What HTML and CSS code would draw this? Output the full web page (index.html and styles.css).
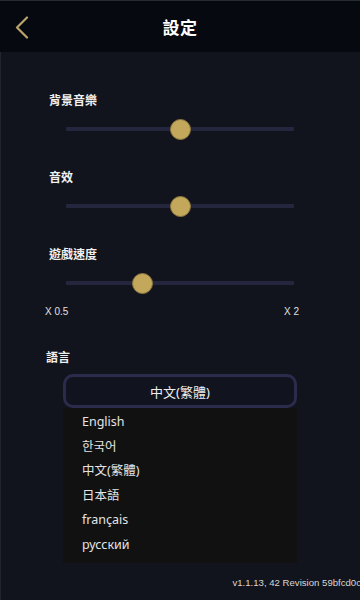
FILE: index.html
```html
<!DOCTYPE html>
<html lang="zh-Hant">
<head>
<meta charset="utf-8">
<link rel="stylesheet" href="styles.css">
</head>
<body>
<div class="app">
  <header class="header">
    <div class="back">
      <svg width="14" height="24" viewBox="0 0 14 24"><path d="M12 1.5 L2 11.5 L12 21.5" fill="none" stroke="#b9a46c" stroke-width="2.2" stroke-linecap="round" stroke-linejoin="round"/></svg>
    </div>
    <h1 class="title">設定</h1>
    <div></div>
  </header>

  <main class="content">
    <section class="setting">
      <div class="label">背景音樂</div>
      <div class="slider"><div class="track"></div><div class="thumb" style="left: 50%"></div></div>
    </section>
    <section class="setting">
      <div class="label">音效</div>
      <div class="slider"><div class="track"></div><div class="thumb" style="left: 50%"></div></div>
    </section>
    <section class="setting">
      <div class="label">遊戲速度</div>
      <div class="slider"><div class="track"></div><div class="thumb" style="left: 33.5%"></div></div>
      <div class="scale"><span>X 0.5</span><span>X 2</span></div>
    </section>

    <section class="lang">
      <div class="label lang-label">語言</div>
      <div class="select">中文(繁體)</div>
      <ul class="options">
        <li>English</li>
        <li>한국어</li>
        <li>中文(繁體)</li>
        <li>日本語</li>
        <li>français</li>
        <li>русский</li>
      </ul>
    </section>
  </main>

  <footer class="version">v1.1.13, 42 Revision 59bfcd0c</footer>
</div>
</body>
</html>
```

FILE: styles.css
```css
* { box-sizing: border-box; }
html, body { margin: 0; padding: 0; }
body {
  width: 360px;
  height: 600px;
  overflow: hidden;
  background: #12141d;
  font-family: "Noto Sans", "Noto Sans CJK TC", sans-serif;
  color: #f2f2f2;
}
.app {
  width: 360px;
  height: 600px;
  display: flex;
  flex-direction: column;
  box-shadow: inset 1px 0 0 #22252e;
}
.header {
  height: 52px;
  flex: none;
  background: #060910;
  border-top: 1px solid #262a33;
  display: grid;
  grid-template-columns: 48px 1fr 48px;
  align-items: center;
}
.back {
  display: flex;
  align-items: center;
  padding-left: 15px;
  padding-top: 2px;
}
.title {
  margin: 0;
  text-align: center;
  font-size: 17px;
  font-weight: 700;
  font-family: "Noto Sans CJK TC", sans-serif;
  color: #ffffff;
  letter-spacing: 0.5px;
}
.content {
  flex: 1;
  padding: 40px 0 0 0;
  display: flex;
  flex-direction: column;
}
.setting {
  display: flex;
  flex-direction: column;
  padding: 0 0 30px 0;
}
.label {
  padding-left: 49px;
  height: 16px;
  line-height: 16px;
  font-size: 12px;
  font-weight: 700;
  font-family: "Noto Sans CJK TC", sans-serif;
  color: #f0f0f0;
}
.slider {
  position: relative;
  height: 20px;
  margin: 11px 66px 0 66px;
}
.track {
  position: absolute;
  left: 0;
  right: 0;
  top: 8px;
  height: 4px;
  background: #24263e;
  border-radius: 1px;
}
.thumb {
  position: absolute;
  top: 0;
  width: 21px;
  height: 21px;
  margin-left: -10.5px;
  border-radius: 50%;
  background: #c3a85b;
  border: 1px solid #8c7641;
}
.scale {
  display: flex;
  justify-content: space-between;
  margin: 13px 61px 0 45px;
  height: 12px;
  line-height: 12px;
  font-size: 10px;
  font-family: "Liberation Sans", sans-serif;
  color: #e0e0e0;
}
.setting:nth-child(3) { padding-bottom: 31px; }
.lang { display: flex; flex-direction: column; }
.lang-label { padding-left: 46px; }
.select {
  margin: 9px 0 0 63px;
  width: 234px;
  height: 34px;
  border: 3px solid #2b2c4b;
  border-radius: 10px;
  background: #11131e;
  display: flex;
  align-items: center;
  justify-content: center;
  font-size: 13px;
  color: #f0f0f0;
}
.options {
  list-style: none;
  margin: 0 0 0 63px;
  padding: 2px 0 5px 19px;
  width: 234px;
  background: #111111;
}
.options li {
  height: 24.6px;
  line-height: 24.6px;
  font-size: 12.5px;
  color: #e4e4e4;
}
.version {
  flex: none;
  height: 38px;
  padding-top: 14px;
  text-align: right;
  font-family: "Liberation Sans", sans-serif;
  font-size: 9.6px;
  color: #d6d6d6;
  white-space: nowrap;
  margin-right: -1px;
}
```
